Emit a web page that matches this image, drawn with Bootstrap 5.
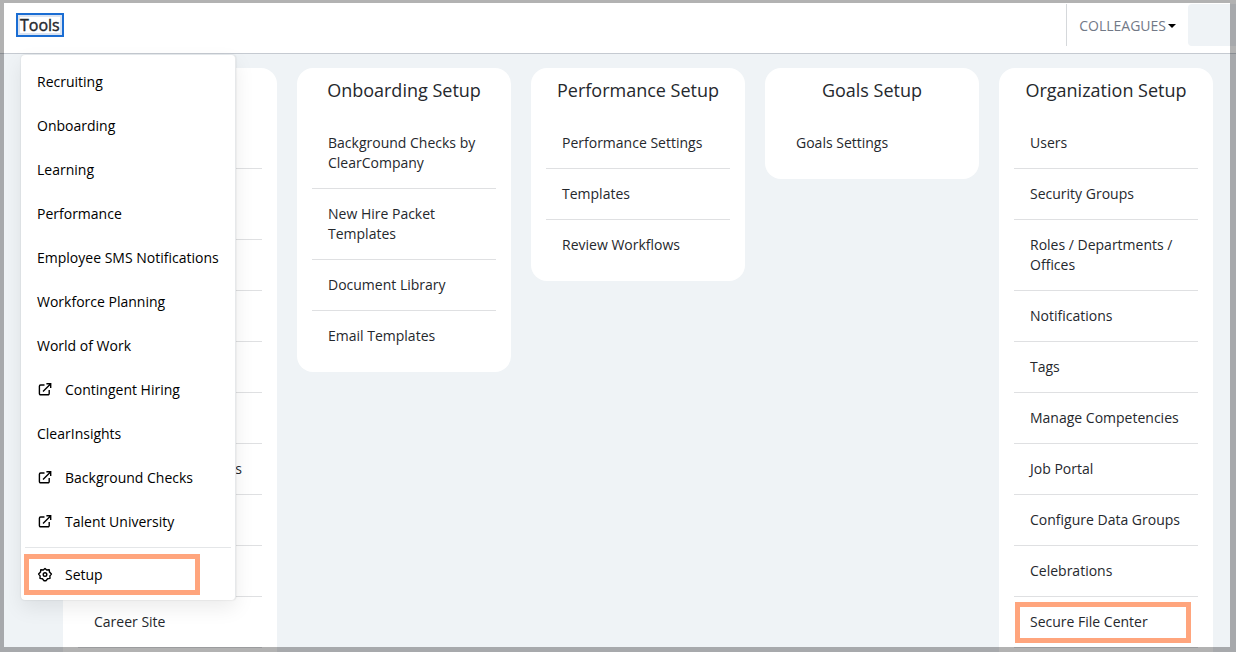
<!DOCTYPE html>
<html lang="en">
<head>
<meta charset="utf-8">
<meta name="viewport" content="width=device-width, initial-scale=1">
<title>Setup</title>
<link href="https://cdn.jsdelivr.net/npm/bootstrap@5.3.0/dist/css/bootstrap.min.css" rel="stylesheet">
<style>
body { background: #eff3f6; color: #25282d; font-family: "Open Sans", "Noto Sans", sans-serif; font-size: 14px; line-height: 20px; }
a { color: inherit; text-decoration: none; }
.topbar { flex: none; height: 54px; padding: 4px 0 0 16px; border-bottom: 1px solid #c5cad1; }
.tools-btn { border: 2px solid #1a6dd3; background: #fff; box-shadow: inset 0 0 0 2px #dbe4f2; margin-top: 9px; padding: 0 2px; height: 24px; font-size: 16px; line-height: 20px; font-weight: 500; color: #25282d; -webkit-text-stroke: .4px; }
.scope-btn { border: 0; border-left: 1px solid #d5d8db; background: none; height: 42px; padding: 2px 12px 0; color: #727987; }
.scope-btn::after { margin-left: 2px; color: #000; vertical-align: 3px; }
.user-slot { width: 48px; height: 42px; background: #eff3f6; border-radius: 4px 0 0 4px; }
.tools-menu { top: 55px; left: 21px; width: 215px; padding: 5px 0 3px; border-right: 1px solid #e6e8ea; border-radius: 4px; box-shadow: 0 8px 20px rgba(0,0,0,.08), 0 0 2px rgba(0,0,0,.14); z-index: 10; }
.tools-menu a { height: 44px; padding: 0 16px; color: #000; }
.tools-menu svg { width: 16px; height: 16px; margin-right: 12px; fill: none; stroke: #000; stroke-width: 1.4; }
.tools-menu hr { margin: 3px 4px 5px; border-color: #e4e6e8; opacity: 1; }
.columns { gap: 20px; padding: 14px 23px 0 63px; min-height: 0; }
.setup-card { flex: 1 1 0; min-width: 0; background: #fff; border-radius: 16px; padding: 0 15px 10px; }
.setup-card h2 { height: 50px; margin: 0; padding-top: 9px; font-size: 18px; line-height: 26px; font-weight: 400; text-align: center; white-space: nowrap; }
.setup-card li { min-height: 51px; padding: 15px 16px; border-bottom: 1px solid #dfe0e2; }
.setup-card li.two-line { min-height: 71px; }
.setup-card li:last-child { border-color: transparent; }
.setup-card.no-title { padding-top: 50px; }
.setup-card.runs-on { padding-bottom: 64px; }
.setup-card.runs-on li:last-child { border-color: #dfe0e2; }
.marker { border: 5px solid #ffa57d; width: 176px; height: 41px; pointer-events: none; }
.marker-menu { left: 3px; bottom: 5px; }
.marker-card { left: 1px; top: 5px; }
.page-frame { inset: 0; border: solid rgba(0,0,0,.3); border-width: 3px 6px 5px 4px; pointer-events: none; z-index: 20; }
</style>
</head>
<body class="vh-100 overflow-hidden d-flex flex-column">
<svg class="d-none" aria-hidden="true">
  <symbol id="icon-external" viewBox="0 0 16 16"><path d="M7.5 3H3.6a1.2 1.2 0 0 0-1.2 1.2v7.4a1.2 1.2 0 0 0 1.2 1.2H11a1.2 1.2 0 0 0 1.2-1.2V8M9.4 1.7h4.3V6M13.5 1.9 6 9.4"/></symbol>
  <symbol id="icon-gear" viewBox="0 0 16 16"><path stroke-linejoin="round" d="M8 1.4 9.7 3l2.5-.3.3 2.4 1.9 2-1.5 1.8.1 2.5-2.4.4L8.9 13.8H7.1L5.4 11.8 3 11.4l.1-2.5L1.6 7.1l1.9-2 .3-2.4 2.5.3Z"/><circle cx="8" cy="7.6" r="1.8"/></symbol>
</svg>
<header class="topbar bg-white d-flex align-items-start">
  <button type="button" class="tools-btn" aria-expanded="true">Tools</button>
  <div class="ms-auto d-flex">
    <button type="button" class="scope-btn dropdown-toggle">COLLEAGUES</button>
    <div class="user-slot"></div>
  </div>
</header>
<nav class="tools-menu position-absolute bg-white" aria-label="Tools">
  <a class="d-flex align-items-center" href="#">Recruiting</a>
  <a class="d-flex align-items-center" href="#">Onboarding</a>
  <a class="d-flex align-items-center" href="#">Learning</a>
  <a class="d-flex align-items-center" href="#">Performance</a>
  <a class="d-flex align-items-center text-nowrap" href="#">Employee SMS Notifications</a>
  <a class="d-flex align-items-center" href="#">Workforce Planning</a>
  <a class="d-flex align-items-center" href="#">World of Work</a>
  <a class="d-flex align-items-center" href="#"><svg><use href="#icon-external"/></svg>Contingent Hiring</a>
  <a class="d-flex align-items-center" href="#">ClearInsights</a>
  <a class="d-flex align-items-center" href="#"><svg><use href="#icon-external"/></svg>Background Checks</a>
  <a class="d-flex align-items-center" href="#"><svg><use href="#icon-external"/></svg>Talent University</a>
  <hr>
  <a class="d-flex align-items-center" href="#"><svg><use href="#icon-gear"/></svg>Setup</a>
  <div class="marker marker-menu position-absolute"></div>
</nav>
<main class="columns flex-fill overflow-hidden d-flex align-items-start">
  <section class="setup-card runs-on no-title">
    <ul class="list-unstyled mb-0">
      <li></li><li class="two-line"></li><li></li><li></li><li></li><li></li>
      <li class="text-end"><span class="me-1">s</span></li>
      <li></li><li></li>
      <li><a href="#">Career Site</a></li>
    </ul>
  </section>
  <section class="setup-card">
    <h2>Onboarding Setup</h2>
    <ul class="list-unstyled mb-0">
      <li><a href="#">Background Checks by ClearCompany</a></li>
      <li><a href="#">New Hire Packet Templates</a></li>
      <li><a href="#">Document Library</a></li>
      <li><a href="#">Email Templates</a></li>
    </ul>
  </section>
  <section class="setup-card">
    <h2>Performance Setup</h2>
    <ul class="list-unstyled mb-0">
      <li><a href="#">Performance Settings</a></li>
      <li><a href="#">Templates</a></li>
      <li><a href="#">Review Workflows</a></li>
    </ul>
  </section>
  <section class="setup-card">
    <h2>Goals Setup</h2>
    <ul class="list-unstyled mb-0">
      <li><a href="#">Goals Settings</a></li>
    </ul>
  </section>
  <section class="setup-card runs-on">
    <h2>Organization Setup</h2>
    <ul class="list-unstyled mb-0">
      <li><a href="#">Users</a></li>
      <li><a href="#">Security Groups</a></li>
      <li><a href="#">Roles / Departments / Offices</a></li>
      <li><a href="#">Notifications</a></li>
      <li><a href="#">Tags</a></li>
      <li class="text-nowrap"><a href="#">Manage Competencies</a></li>
      <li><a href="#">Job Portal</a></li>
      <li class="text-nowrap"><a href="#">Configure Data Groups</a></li>
      <li><a href="#">Celebrations</a></li>
      <li class="position-relative"><a href="#">Secure File Center</a><div class="marker marker-card position-absolute"></div></li>
    </ul>
  </section>
</main>
<div class="page-frame position-fixed"></div>
<script src="https://cdn.jsdelivr.net/npm/bootstrap@5.3.0/dist/js/bootstrap.bundle.min.js"></script>
</body>
</html>
